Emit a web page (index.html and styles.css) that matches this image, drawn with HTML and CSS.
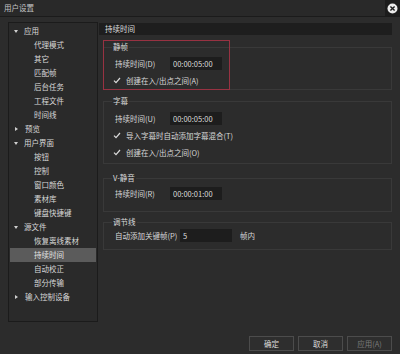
FILE: index.html
```html
<!DOCTYPE html>
<html lang="zh-CN">
<head>
    <meta charset="UTF-8">
    <meta name="viewport" content="width=device-width, initial-scale=1.0">
    <title>用户设置</title>
    <link rel="stylesheet" href="styles.css">
</head>
<body>
    <div class="window">
        <div class="titlebar">
            <span class="title">用户设置</span>
            <span class="close">
                <svg width="11" height="11" viewBox="0 0 11 11">
                    <circle cx="5.5" cy="5.5" r="5" fill="#ececec"/>
                    <path d="M3.4 3.4 L7.6 7.6 M7.6 3.4 L3.4 7.6" stroke="#1c1c1c" stroke-width="1.4"/>
                </svg>
            </span>
        </div>

        <div class="main">
            <ul class="tree">
                <li class="node"><i class="arrow down"></i>应用</li>
                <li class="leaf">代理模式</li>
                <li class="leaf">其它</li>
                <li class="leaf">匹配帧</li>
                <li class="leaf">后台任务</li>
                <li class="leaf">工程文件</li>
                <li class="leaf">时间线</li>
                <li class="node"><i class="arrow right"></i>预览</li>
                <li class="node"><i class="arrow down"></i>用户界面</li>
                <li class="leaf">按钮</li>
                <li class="leaf">控制</li>
                <li class="leaf">窗口颜色</li>
                <li class="leaf">素材库</li>
                <li class="leaf">键盘快捷键</li>
                <li class="node"><i class="arrow down"></i>源文件</li>
                <li class="leaf">恢复离线素材</li>
                <li class="leaf selected">持续时间</li>
                <li class="leaf">自动校正</li>
                <li class="leaf">部分传输</li>
                <li class="node"><i class="arrow right"></i>输入控制设备</li>
            </ul>

            <div class="content">
                <div class="page-title">持续时间</div>

                <div class="annotated">
                    <fieldset class="group g-still">
                        <legend>静帧</legend>
                        <div class="row">
                            <label>持续时间(D)</label>
                            <input type="text" value="00:00:05:00">
                        </div>
                        <div class="row check">
                            <svg class="tick" width="8" height="7" viewBox="0 0 8 7"><path d="M1 3.6 L3 5.6 L7 1" fill="none" stroke="#dcdcdc" stroke-width="1.2"/></svg>
                            <span>创建在入/出点之间(A)</span>
                        </div>
                    </fieldset>
                    <div class="highlight"></div>
                </div>

                <fieldset class="group g-title">
                    <legend>字幕</legend>
                    <div class="row">
                        <label>持续时间(U)</label>
                        <input type="text" value="00:00:05:00">
                    </div>
                    <div class="row check">
                        <svg class="tick" width="8" height="7" viewBox="0 0 8 7"><path d="M1 3.6 L3 5.6 L7 1" fill="none" stroke="#dcdcdc" stroke-width="1.2"/></svg>
                        <span>导入字幕时自动添加字幕混合(T)</span>
                    </div>
                    <div class="row check">
                        <svg class="tick" width="8" height="7" viewBox="0 0 8 7"><path d="M1 3.6 L3 5.6 L7 1" fill="none" stroke="#dcdcdc" stroke-width="1.2"/></svg>
                        <span>创建在入/出点之间(O)</span>
                    </div>
                </fieldset>

                <fieldset class="group g-mute">
                    <legend>V-静音</legend>
                    <div class="row">
                        <label>持续时间(R)</label>
                        <input type="text" value="00:00:01:00">
                    </div>
                </fieldset>

                <fieldset class="group g-rubber">
                    <legend>调节线</legend>
                    <div class="row">
                        <label class="wide">自动添加关键帧(P)</label>
                        <input type="text" value="5">
                        <span class="unit">帧内</span>
                    </div>
                </fieldset>
            </div>
        </div>

        <div class="footer">
            <button>确定</button>
            <button>取消</button>
            <button class="disabled">应用(A)</button>
        </div>
    </div>
</body>
</html>
```

FILE: styles.css
```css
* {
    box-sizing: border-box;
}
body {
    margin: 0;
    background-color: #2c2c2c;
    font-family: "Noto Sans CJK SC", "Noto Sans", sans-serif;
    font-size: 7.5px;
    color: #d8d8d8;
}
.window {
    width: 400px;
    height: 354px;
    display: flex;
    flex-direction: column;
    background-color: #2c2c2c;
}
.titlebar {
    height: 17px;
    display: flex;
    justify-content: space-between;
    align-items: center;
    background-color: #292929;
    border-bottom: 1px solid #1b1b1b;
}
.title {
    padding-left: 4px;
    color: #c4c4c4;
    line-height: 16px;
}
.close {
    width: 15px;
    height: 16px;
    display: flex;
    align-items: center;
    justify-content: center;
    background-color: #1c1c1c;
}
.main {
    display: flex;
    padding: 5px 0 0 8px;
}
.tree {
    list-style: none;
    margin: 0 1px 0 0;
    padding: 1px 0 0 0;
    width: 90px;
    height: 300px;
    background-color: #2a2a2a;
    border: 1px solid #1b1b1b;
}
.tree li {
    height: 14px;
    line-height: 14px;
    margin: 0 1px;
    white-space: nowrap;
}
.node {
    display: flex;
    align-items: center;
    padding-left: 4px;
}
.leaf {
    padding-left: 24px;
}
.leaf.selected {
    background-color: #5b5b5b;
    color: #e4e4e4;
}
.arrow {
    display: inline-block;
    width: 0;
    height: 0;
    margin-right: 6px;
}
.arrow.down {
    border-left: 2.5px solid transparent;
    border-right: 2.5px solid transparent;
    border-top: 3px solid #cfcfcf;
}
.arrow.right {
    margin-left: 1px;
    margin-right: 7px;
    border-top: 2.5px solid transparent;
    border-bottom: 2.5px solid transparent;
    border-left: 3px solid #cfcfcf;
}
.content {
    flex: 1;
    padding-top: 1px;
}
.page-title {
    height: 12px;
    line-height: 12px;
    margin-right: 8px;
    padding-left: 6px;
    background-color: #1e1e1e;
    color: #dedede;
}
.annotated {
    position: relative;
}
.group {
    margin: 0 8px 0 4px;
    padding: 3px 0 0 8px;
    min-width: 0;
    border: 1px solid #393939;
}
.group legend {
    padding: 0 1px;
    line-height: 10px;
    color: #dadada;
}
.g-still {
    margin-top: 7px;
}
.g-title {
    margin-top: 6px;
    padding-top: 4px;
    padding-bottom: 2px;
}
.g-mute {
    margin-top: 9px;
    padding-top: 2px;
    padding-bottom: 9px;
}
.g-rubber {
    margin-top: 5px;
    padding-top: 0;
    padding-bottom: 5px;
}
.row {
    display: flex;
    align-items: center;
    height: 17px;
    padding-left: 3px;
    white-space: nowrap;
}
.row label {
    flex: none;
    width: 55px;
}
.row label.wide {
    width: 65px;
}
.row input {
    width: 52px;
    height: 13px;
    padding: 0 0 0 3px;
    border: none;
    background-color: #1d1d1d;
    color: #dcdcdc;
    font-family: inherit;
    font-size: 7.5px;
    outline: none;
}
.unit {
    margin-left: 8px;
}
.check {
    padding-left: 1px;
}
.tick {
    margin-right: 5px;
}
.highlight {
    position: absolute;
    left: 4px;
    top: -2px;
    width: 127px;
    height: 50px;
    border: 1px solid #983242;
    pointer-events: none;
}
.footer {
    display: flex;
    justify-content: flex-end;
    gap: 4px;
    padding: 14px 8px 0 0;
}
.footer button {
    width: 45px;
    height: 15px;
    padding: 0;
    background-color: #2e2e2e;
    border: 1px solid #4c4c4c;
    color: #dcdcdc;
    font-family: inherit;
    font-size: 7.5px;
}
.footer button.disabled {
    color: #7a7a7a;
}
```
